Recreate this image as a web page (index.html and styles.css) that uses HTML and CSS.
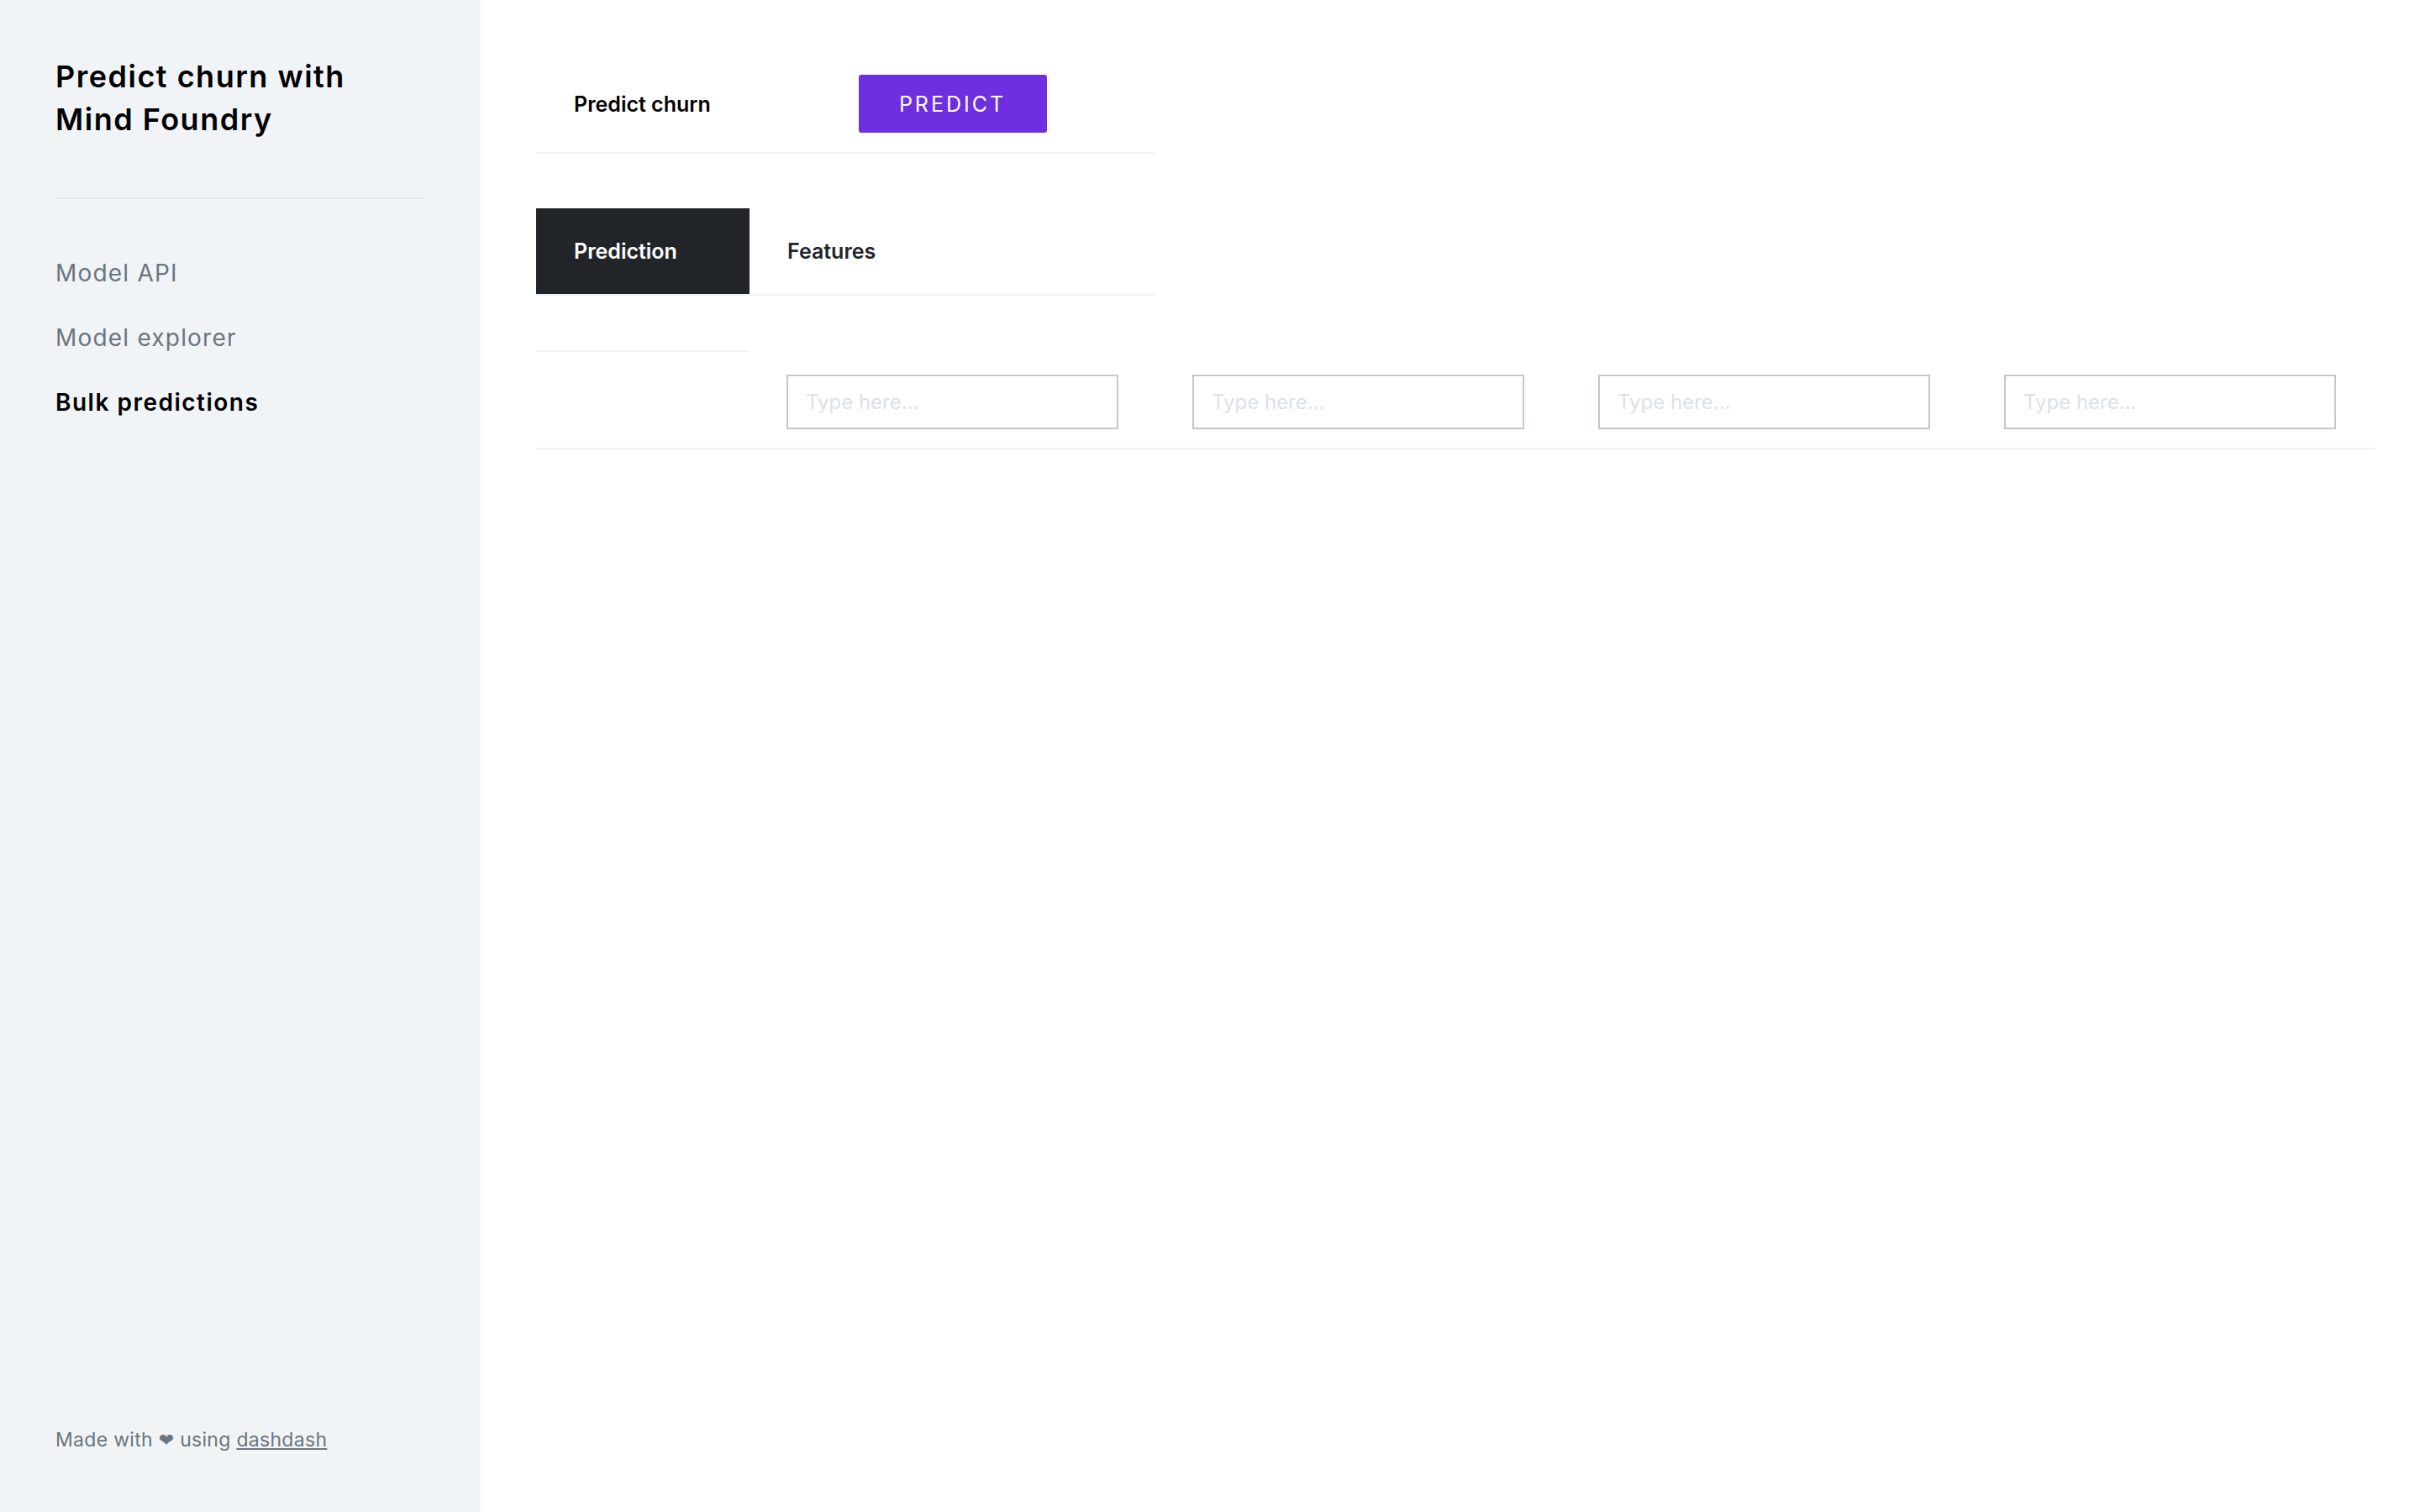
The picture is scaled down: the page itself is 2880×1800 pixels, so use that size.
FILE: index.html
```html
<!DOCTYPE html>
<html lang="en">
<head>
    <meta charset="UTF-8">
    <meta name="viewport" content="width=device-width, initial-scale=1.0">
    <title>Predict churn with Mind Foundry</title>
    <link rel="stylesheet" href="styles.css">
</head>
<body>

    <div class="sidebar">
        <h1 class="app-title">Predict churn with Mind Foundry</h1>
        <hr class="sidebar-rule">
        <nav class="nav">
            <a class="nav-link" href="#">Model API</a>
            <a class="nav-link" href="#">Model explorer</a>
            <a class="nav-link active" href="#">Bulk predictions</a>
        </nav>
        <div class="footer">
            Made with <span class="heart">&#10084;</span> using <a href="#">dashdash</a>
        </div>
    </div>

    <div class="main">
        <div class="action-row">
            <div class="cell label">Predict churn</div>
            <div class="cell center">
                <button type="button" class="predict-btn">PREDICT</button>
            </div>
        </div>

        <div class="tabs">
            <div class="tab active">Prediction</div>
            <div class="tab">Features</div>
        </div>

        <div class="grid">
            <div class="head-row">
                <div class="head-cell"></div>
            </div>
            <div class="data-row">
                <div class="data-cell first"></div>
                <div class="data-cell"><input type="text" placeholder="Type here..."></div>
                <div class="data-cell"><input type="text" placeholder="Type here..."></div>
                <div class="data-cell"><input type="text" placeholder="Type here..."></div>
                <div class="data-cell"><input type="text" placeholder="Type here..."></div>
            </div>
        </div>
    </div>

</body>
</html>
```

FILE: styles.css
```css
body {
    font-family: Inter, "Liberation Sans", Arial, sans-serif;
    margin: 0;
    padding: 0;
    display: flex;
    height: 100vh;
    color: #000;
    background-color: #fff;
}

/* sidebar */
.sidebar {
    width: 572px;
    flex-shrink: 0;
    box-sizing: border-box;
    background-color: #f1f4f7;
    padding: 66px 66px 0 66px;
    display: flex;
    flex-direction: column;
}

.app-title {
    font-size: 36px;
    font-weight: 600;
    line-height: 51px;
    letter-spacing: 1.5px;
    margin: 0;
    width: 420px;
}

.sidebar-rule {
    border: none;
    border-top: 2px solid #e2e7eb;
    margin: 67px 0 72px 0;
}

.nav {
    display: flex;
    flex-direction: column;
    gap: 44px;
}

.nav-link {
    font-size: 28px;
    line-height: 33px;
    letter-spacing: 1.2px;
    color: #6c757d;
    text-decoration: none;
}

.nav-link.active {
    color: #000;
    font-weight: 600;
    letter-spacing: 1.5px;
}

.footer {
    margin-top: auto;
    padding-bottom: 72px;
    font-size: 23px;
    letter-spacing: 0.3px;
    color: #6c757d;
}

.footer a {
    color: #6c757d;
}

.heart {
    font-family: "DejaVu Sans", sans-serif;
    font-size: 22px;
}

/* main area */
.main {
    flex: 1;
    padding: 66px 53px 0 66px;
}

.action-row,
.tabs {
    display: grid;
    grid-template-columns: 254px 483px;
    width: 737px;
    border-bottom: 2px solid #f0f3f6;
}

.action-row {
    height: 115px;
}

.cell {
    display: flex;
    align-items: center;
}

.label {
    padding-left: 45px;
    font-size: 25px;
    font-weight: 600;
}

.center {
    justify-content: center;
}

.predict-btn {
    background-color: #6e2fe1;
    color: #fff;
    border: none;
    border-radius: 3px;
    width: 224px;
    height: 69px;
    font-family: inherit;
    font-size: 25px;
    letter-spacing: 3px;
    cursor: pointer;
}

.tabs {
    margin-top: 65px;
    height: 102px;
}

.tab {
    display: flex;
    align-items: center;
    padding-left: 45px;
    font-size: 25px;
    font-weight: 600;
    color: #212529;
}

.tab.active {
    background-color: #212529;
    color: #fff;
}

.head-row {
    height: 67px;
    display: flex;
}

.head-cell {
    width: 254px;
    border-bottom: 2px solid #f0f3f6;
}

.data-row {
    display: grid;
    grid-template-columns: 254px repeat(4, 483px);
    border-bottom: 2px solid #f0f3f6;
    padding: 27px 0 22px 0;
}

.data-cell {
    padding: 0 44px;
}

input[type="text"] {
    box-sizing: border-box;
    width: 395px;
    height: 65px;
    border: 2px solid #c1c7cd;
    border-radius: 0;
    padding: 0 21px;
    font-family: inherit;
    font-size: 24px;
    outline: none;
}

input::placeholder {
    color: #dce1e6;
}
```
